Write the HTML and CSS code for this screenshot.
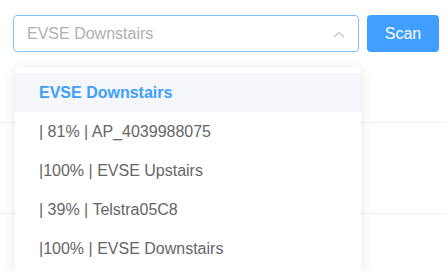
FILE: index.html
```html
<!DOCTYPE html>
<html lang="en">
<head>
    <meta charset="UTF-8">
    <meta name="viewport" content="width=device-width, initial-scale=1.0">
    <link rel="stylesheet" href="styles.css">
    <title>WiFi Scan</title>
</head>
<body>

    <div class="toolbar">
        <div class="select">
            <span class="select-value">EVSE Downstairs</span>
            <svg class="select-arrow" width="12" height="7" viewBox="0 0 12 7">
                <path d="M1 6 L6 1.5 L11 6" fill="none" stroke="#c0c4cc" stroke-width="1.3"/>
            </svg>
        </div>
        <button class="scan-btn" type="button">Scan</button>
    </div>

    <div class="table">
        <div class="table-row"></div>
        <div class="table-row"></div>
    </div>

    <!-- dropdown of the select, open -->
    <div class="dropdown">
        <div class="dropdown-arrow"></div>
        <ul class="dropdown-list">
            <li class="dropdown-item selected">EVSE Downstairs</li>
            <li class="dropdown-item">| 81% | AP_4039988075</li>
            <li class="dropdown-item">|100% | EVSE Upstairs</li>
            <li class="dropdown-item">| 39% | Telstra05C8</li>
            <li class="dropdown-item">|100% | EVSE Downstairs</li>
        </ul>
    </div>

</body>
</html>
```

FILE: styles.css
```css
body {
    font-family: "Liberation Sans", Arial, sans-serif;
    margin: 0;
    padding: 0;
    background-color: #ffffff;
    overflow: hidden;
}

.toolbar {
    display: flex;
    gap: 8px;
    padding: 15px 0 0 13px;
}

.select {
    width: 346px;
    height: 37px;
    box-sizing: border-box;
    border: 1px solid #84c0fb;
    border-radius: 4px;
    display: flex;
    align-items: center;
    justify-content: space-between;
    padding: 0 13px 0 13px;
}

.select-value {
    font-size: 16px;
    color: #b0b0b0;
}

.select-arrow {
    margin-top: 1px;
}

.scan-btn {
    width: 72px;
    height: 37px;
    border: none;
    border-radius: 4px;
    background-color: #409eff;
    color: #ffffff;
    font-family: inherit;
    font-size: 16px;
    padding: 0;
}

.table {
    margin-top: 70px;
}

.table-row {
    height: 90px;
    border-top: 1px solid #f2f2f2;
}

.table-row:last-child {
    height: 57px;
}

.dropdown {
    position: absolute;
    top: 67px;
    left: 15px;
    width: 346px;
    height: 204px;
    overflow: hidden;
    background-color: #ffffff;
    box-shadow: 0 2px 12px rgba(0, 0, 0, 0.1);
}

.dropdown-arrow {
    position: absolute;
    top: -6px;
    left: 168px;
    width: 0;
    height: 0;
    border-left: 6px solid transparent;
    border-right: 6px solid transparent;
    border-bottom: 6px solid #ffffff;
}

.dropdown-list {
    list-style: none;
    margin: 0;
    padding: 6px 0;
}

.dropdown-item {
    height: 39px;
    line-height: 39px;
    padding: 0 24px;
    font-size: 16px;
    color: #666666;
}

.dropdown-item.selected {
    background-color: #f5f7fa;
    color: #409eff;
    font-weight: bold;
}
```
